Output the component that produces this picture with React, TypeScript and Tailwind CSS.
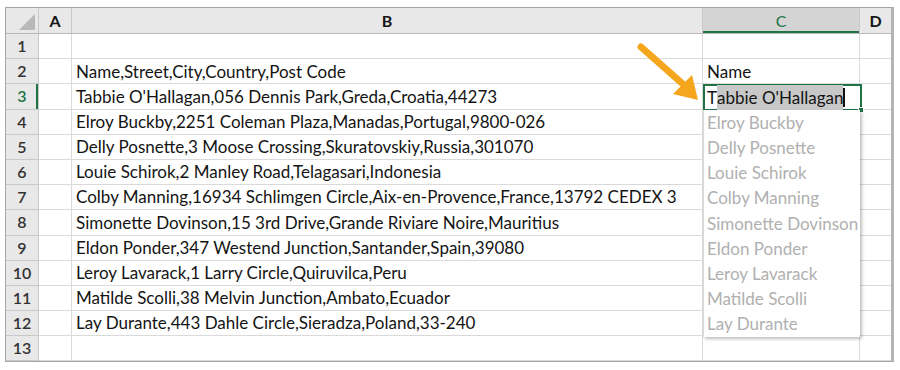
import React from 'react';

const rows: string[] = [
  "",
  "Name,Street,City,Country,Post Code",
  "Tabbie O'Hallagan,056 Dennis Park,Greda,Croatia,44273",
  "Elroy Buckby,2251 Coleman Plaza,Manadas,Portugal,9800-026",
  "Delly Posnette,3 Moose Crossing,Skuratovskiy,Russia,301070",
  "Louie Schirok,2 Manley Road,Telagasari,Indonesia",
  "Colby Manning,16934 Schlimgen Circle,Aix-en-Provence,France,13792 CEDEX 3",
  "Simonette Dovinson,15 3rd Drive,Grande Riviare Noire,Mauritius",
  "Eldon Ponder,347 Westend Junction,Santander,Spain,39080",
  "Leroy Lavarack,1 Larry Circle,Quiruvilca,Peru",
  "Matilde Scolli,38 Melvin Junction,Ambato,Ecuador",
  "Lay Durante,443 Dahle Circle,Sieradza,Poland,33-240",
  "",
];

const suggestions = [
  "Elroy Buckby",
  "Delly Posnette",
  "Louie Schirok",
  "Colby Manning",
  "Simonette Dovinson",
  "Eldon Ponder",
  "Leroy Lavarack",
  "Matilde Scolli",
  "Lay Durante",
];

const font = { fontFamily: 'Lato, "Open Sans", sans-serif' };

export default function App() {
  return (
    <div className="w-[900px] h-[370px] bg-white pt-[7px] pl-[5px]" style={font}>
      <div className="relative w-[889px] border border-[#a6a6a6] border-r-[3px] border-r-[#b4b4b4] text-[17px] text-[#141414]">
        {/* column headers */}
        <div className="flex h-[26px] bg-[#e8e8e8] border-b border-[#b8b8b8] text-[16px]">
          <div className="w-[33px] border-r border-[#c8c8c8] flex items-end justify-end p-[3px]">
            <div className="w-0 h-0 border-l-[16px] border-l-transparent border-b-[16px] border-b-[#b8b8b8]" />
          </div>
          <div className="w-[33px] border-r border-[#c8c8c8] flex items-center justify-center font-bold">A</div>
          <div className="w-[631px] border-r border-[#c8c8c8] flex items-center justify-center font-bold">B</div>
          <div className="w-[157px] border-r border-[#c8c8c8] bg-[#d4d4d4] flex items-center justify-center text-[#217346] shadow-[inset_0_-2px_0_#217346]">C</div>
          <div className="flex-1 flex items-center justify-center font-bold">D</div>
        </div>

        {rows.map((text, i) => {
          const n = i + 1;
          const active = n === 3;
          return (
            <div key={n} className="flex h-[25.2px]">
              <div
                className={`w-[33px] bg-[#e8e8e8] border-r border-b border-[#c8c8c8] flex items-center justify-center text-[16px] font-semibold ${
                  active ? "text-[#217346] shadow-[inset_-2px_0_0_#217346]" : "text-[#333]"
                }`}
              >
                {n}
              </div>
              <div className="w-[33px] border-r border-b border-[#dadada]" />
              <div className="w-[631px] border-r border-b border-[#dadada] flex items-center pl-[4px] whitespace-nowrap">
                {text}
              </div>
              <div className="w-[157px] border-r border-b border-[#dadada] flex items-center pl-[4px] whitespace-nowrap">
                {n === 2 ? "Name" : ""}
              </div>
              <div className="flex-1 border-b border-[#dadada]" />
            </div>
          );
        })}

        {/* active cell C3 in edit mode */}
        <div className="absolute left-[697px] top-[76px] w-[159px] h-[27px] border-2 border-[#217346] bg-white flex items-center pl-[2px] whitespace-nowrap">
          <span>T</span>
          <span className="bg-[#c8c8c8]">abbie O'Hallagan</span>
          <span className="w-[1.5px] h-[19px] bg-[#111]" />
          <div className="absolute right-[-4px] bottom-[-4px] w-[6px] h-[6px] bg-[#217346] border border-white" />
        </div>

        {/* autocomplete list */}
        <div className="absolute left-[697px] top-[102px] w-[157px] bg-white border-l border-[#dadada] shadow-[2px_2px_3px_rgba(0,0,0,0.25)]">
          {suggestions.map((s) => (
            <div key={s} className="h-[25.2px] flex items-center pl-[3px] text-[#b0b0b0] whitespace-nowrap overflow-hidden">
              {s}
            </div>
          ))}
        </div>

        {/* callout arrow */}
        <svg className="absolute left-[624px] top-[30px]" width="80" height="70" viewBox="0 0 80 70">
          <line x1="11" y1="9" x2="54" y2="47" stroke="#f5a61c" strokeWidth="7" strokeLinecap="round" />
          <polygon points="68,62 43,56 62,37" fill="#f5a61c" />
        </svg>
      </div>
    </div>
  );
}
